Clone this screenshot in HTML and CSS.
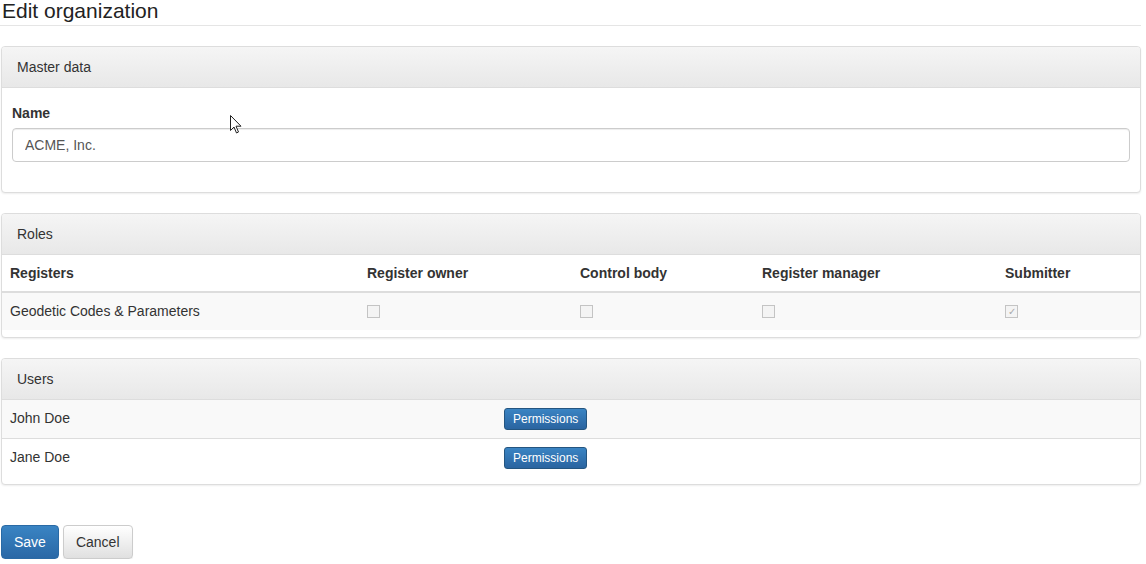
FILE: index.html
```html
<!DOCTYPE html>
<html>
<head>
<meta charset="utf-8">
<link rel="stylesheet" href="styles.css">
</head>
<body>
<div class="page">
  <h1 class="title">Edit organization</h1>

  <div class="panel">
    <div class="panel-heading">Master data</div>
    <div class="panel-body">
      <label class="label">Name</label>
      <input class="input" type="text" value="ACME, Inc.">
    </div>
  </div>

  <div class="panel panel-table">
    <div class="panel-heading">Roles</div>
    <table class="table roles">
      <colgroup>
        <col class="c1"><col class="c2"><col class="c3"><col class="c4"><col class="c5">
      </colgroup>
      <thead>
        <tr><th>Registers</th><th>Register owner</th><th>Control body</th><th>Register manager</th><th>Submitter</th></tr>
      </thead>
      <tbody>
        <tr class="striped">
          <td>Geodetic Codes &amp; Parameters</td>
          <td><span class="check"></span></td>
          <td><span class="check"></span></td>
          <td><span class="check"></span></td>
          <td><span class="check checked">&#10003;</span></td>
        </tr>
      </tbody>
    </table>
  </div>

  <div class="panel panel-table">
    <div class="panel-heading">Users</div>
    <div class="user-list">
      <div class="user-row striped-row"><span>John Doe</span><span><button class="btn-perm">Permissions</button></span></div>
      <div class="user-row"><span>Jane Doe</span><span><button class="btn-perm">Permissions</button></span></div>
    </div>
  </div>

  <div class="actions">
    <button class="btn btn-primary">Save</button>
    <button class="btn btn-default">Cancel</button>
  </div>

  <svg class="cursor" width="12" height="20" viewBox="0 0 12 20">
    <path d="M0.5 0.5 L0.5 15.5 L4 12 L6.5 18 L8.5 17 L6 11.2 L11 11.2 Z" fill="#fff" stroke="#222" stroke-width="1"/>
  </svg>
</div>
</body>
</html>
```

FILE: styles.css
```css
* { box-sizing: border-box; }

body {
  margin: 0;
  font-family: "Liberation Sans", Arial, sans-serif;
  font-size: 14px;
  line-height: 20px;
  color: #333;
  background: #fff;
}

.page {
  position: relative;
  width: 1141px;
  padding-left: 1px;
}

.title {
  margin: 0 0 20px -1px;
  padding: 0 0 3px 2px;
  font-size: 21px;
  line-height: 22px;
  font-weight: normal;
  color: #222;
  border-bottom: 1px solid #e5e5e5;
}

.panel {
  border: 1px solid #ddd;
  border-radius: 4px;
  box-shadow: 0 1px 2px rgba(0,0,0,0.07);
  margin-bottom: 20px;
  background: #fff;
  overflow: hidden;
}

.panel-heading {
  padding: 10px 15px;
  border-bottom: 1px solid #ddd;
  background: linear-gradient(#f5f5f5, #e8e8e8);
  color: #333;
}

.panel-body {
  padding: 15px 10px;
  display: flex;
  flex-direction: column;
}

.label {
  font-weight: bold;
  margin-bottom: 5px;
}

.input {
  height: 34px;
  padding: 6px 12px;
  font: inherit;
  color: #555;
  border: 1px solid #ccc;
  border-radius: 4px;
  box-shadow: inset 0 1px 1px rgba(0,0,0,0.075);
  margin-bottom: 15px;
  width: 100%;
}

.panel-table { padding-bottom: 7px; }

.table {
  width: 100%;
  border-collapse: collapse;
  table-layout: fixed;
}

.c1 { width: 357px; }
.c2 { width: 213px; }
.c3 { width: 182px; }
.c4 { width: 243px; }
.c5 { width: auto; }

.table th {
  text-align: left;
  font-weight: bold;
  padding: 8px;
  line-height: 20px;
  border-bottom: 2px solid #ddd;
}

.table td {
  padding: 8px 8px 9px;
  line-height: 20px;
  vertical-align: middle;
}

.striped td { background: #f9f9f9; }

.user-list {
  display: flex;
  flex-direction: column;
}

.user-row {
  display: grid;
  grid-template-columns: 494px 1fr;
  align-items: center;
  height: 38px;
  padding: 0 8px 2px;
}

.user-row + .user-row {
  border-top: 1px solid #ddd;
  height: 39px;
}

.striped-row { background: #f9f9f9; }

.check {
  display: inline-block;
  width: 13px;
  height: 13px;
  border: 1px solid #c4c4c4;
  background: #f4f4f4;
  vertical-align: middle;
  margin-top: -2px;
  font-size: 10px;
  line-height: 11px;
  text-align: center;
  color: #aaa;
}

.btn-perm {
  display: block;
  font-family: "Liberation Sans", Arial, sans-serif;
  font-size: 12px;
  line-height: 16px;
  height: 22px;
  padding: 2px 8px;
  margin-top: 2px;
  color: #fff;
  border: 1px solid #245580;
  border-radius: 3px;
  background: linear-gradient(#3a84c3, #2a64a0);
}

.actions {
  display: flex;
  gap: 4px;
  margin-top: 40px;
}

.btn {
  font-family: "Liberation Sans", Arial, sans-serif;
  font-size: 14px;
  line-height: 20px;
  padding: 6px 12px;
  border-radius: 4px;
  border: 1px solid #ccc;
}

.btn-primary {
  color: #fff;
  border-color: #2a6aa5;
  background: linear-gradient(#3a84c3, #2a68a6);
}

.btn-default {
  color: #333;
  background: linear-gradient(#fff, #e0e0e0);
  box-shadow: 0 1px 1px rgba(0,0,0,0.075);
}

.cursor {
  position: absolute;
  left: 230px;
  top: 115px;
}
```
